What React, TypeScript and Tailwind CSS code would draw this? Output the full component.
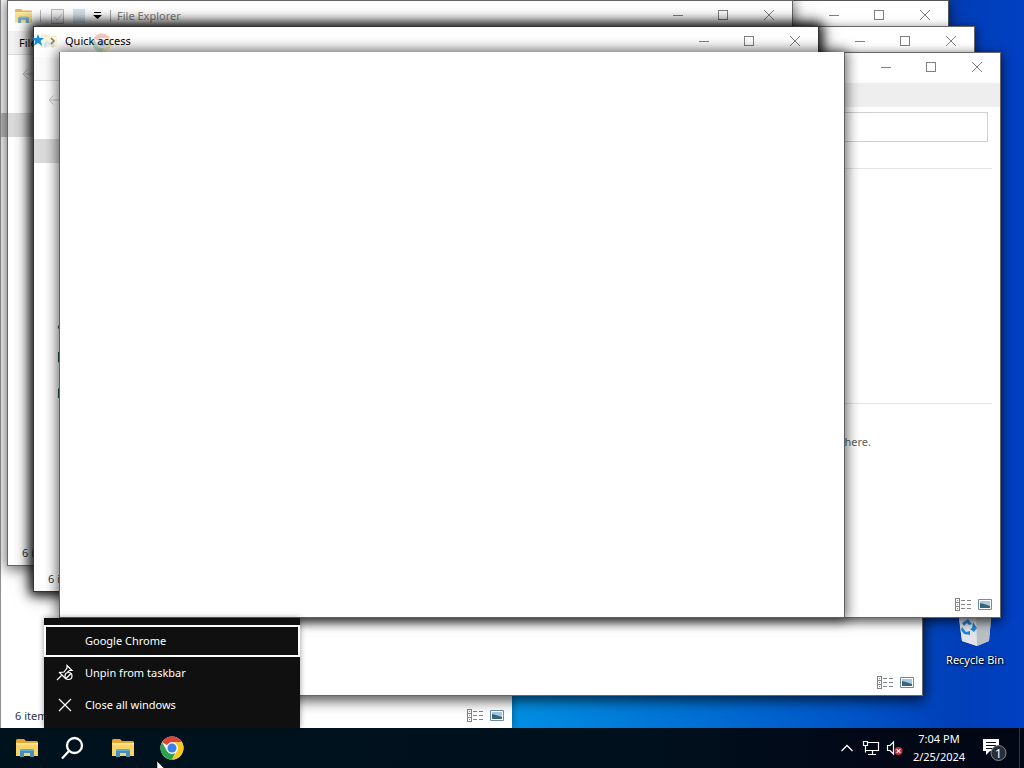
import type { ReactNode } from "react";

function FolderIcon({ className }: { className?: string }) {
  return (
    <svg viewBox="0 0 22 20" className={className} aria-hidden="true">
      <path d="M0 2.500Q0 1 1.500 1H8l2 2h10.500Q22 3 22 4.500V18H0z" fill="#e3a52f" />
      <path d="M0 5h22v13H0z" fill="#f8d468" />
      <path d="M0 5h22v1.500H0z" fill="#fde7a0" />
      <path d="M4 19v-6q0-2 2-2h10q2 0 2 2v6h-4v-4H8v4z" fill="#4690b8" />
      <path d="M4 13q0-2 2-2h10q2 0 2 2z" fill="#5cadd0" />
    </svg>
  );
}

function ChromeIcon({ className }: { className?: string }) {
  return (
    <svg viewBox="0 0 48 48" className={className} aria-hidden="true">
      <circle cx="24" cy="24" r="23" fill="#fff" />
      <path d="M24 1a23 23 0 0 1 19.900 11.500H24a11.500 11.500 0 0 0-10 5.750L4.080 12.500A23 23 0 0 1 24 1z" fill="#dd4437" />
      <path d="M43.900 12.500A23 23 0 0 1 24 47l9.960-17.250A11.500 11.500 0 0 0 34 18.250 11.500 11.500 0 0 0 24 12.500z" fill="#fbc91e" />
      <path d="M24 47A23 23 0 0 1 4.080 12.500L14.040 29.750A11.500 11.500 0 0 0 24 35.500q3.500 0 6.640-2.100z" fill="#2fa24c" />
      <circle cx="24" cy="24" r="11.500" fill="#f4f7fb" />
      <circle cx="24" cy="24" r="9" fill="#3b7fe8" />
    </svg>
  );
}

function Caption() {
  return (
    <div className="ml-auto flex h-full text-[#808080]">
      <button aria-label="Minimize" className="grid h-full w-[46px] place-items-center">
        <svg viewBox="0 0 12 12" className="size-3" fill="none" stroke="currentColor" shapeRendering="crispEdges"><path d="M2 6.500h10" /></svg>
      </button>
      <button aria-label="Maximize" className="grid h-full w-[46px] place-items-center">
        <svg viewBox="0 0 12 12" className="size-3" fill="none" stroke="currentColor" shapeRendering="crispEdges"><path d="M1.500 1.500h9v9h-9z" /></svg>
      </button>
      <button aria-label="Close" className="grid h-full w-[46px] place-items-center">
        <svg viewBox="0 0 12 12" className="size-3" fill="none" stroke="currentColor"><path d="M1 1l10 10M11 1L1 11" /></svg>
      </button>
    </div>
  );
}

function StatusBar({ items }: { items?: boolean }) {
  return (
    <div className="mt-auto flex h-6 items-center justify-between pr-[7px] pl-3.5 text-[#303648]">
      <span>{items ? "6 items" : ""}</span>
      <div className="flex gap-1.5 pb-0.5">
        <button aria-label="Details view" className="block">
          <svg viewBox="0 0 17 13" className="h-[13px] w-[17px]" fill="none" stroke="#7f8388" shapeRendering="crispEdges">
            <path d="M.5.5h4v12h-4zM.5 4.500h4M.5 8.500h4" />
            <path d="M2 2.500h1M2 6.500h1M2 10.500h1M6 2.500h4M12 2.500h4M6 6.500h4M12 6.500h4M6 10.500h4M12 10.500h4" />
          </svg>
        </button>
        <button aria-label="Large icons view" className="block">
          <svg viewBox="0 0 15 13" className="h-[13px] w-[15px]">
            <path d="M.5 1.500h13v10H.5z" fill="#fff" stroke="#6a8ca8" />
            <path d="M2 3h10v7H2z" fill="#a6cbe3" />
            <path d="M2 5l4 1 6 2v2H2z" fill="#3b6478" />
          </svg>
        </button>
      </div>
    </div>
  );
}

function Window({ label, place, title, children, items, blank }: {
  label: string;
  place: string;
  title?: ReactNode;
  children?: ReactNode;
  items?: boolean;
  blank?: boolean;
}) {
  return (
    <section aria-label={label} className={`absolute flex flex-col overflow-hidden bg-white ${place}`}>
      {!blank && (
        <>
          <div className="flex h-[30px] shrink-0 items-center pb-0.5">{title}<Caption /></div>
          {children}
          <StatusBar items={items} />
        </>
      )}
    </section>
  );
}

function BackArrow() {
  return (
    <svg viewBox="0 0 12 12" className="size-3" fill="none" stroke="#c4c4c4" aria-hidden="true"><path d="M12 6H1M5.500 1.500L1 6l4.500 4.500" /></svg>
  );
}

function Desktop() {
  return (
    <main className="relative flex-1 overflow-hidden bg-[linear-gradient(90deg,#008fe2_50%,#0057c8_82%,#003eb8_94%,#0040c2_100%)]">
      <a href="#recycle-bin" className="absolute top-[606px] left-[940px] flex w-[70px] flex-col items-center text-white">
        <svg viewBox="0 0 36 42" className="h-[42px] w-9" aria-hidden="true">
          <path d="M1 3l34-1-3 33-12 5-15-5z" fill="#d0d4d8" />
          <path d="M19 4l16-2-3 33-12 5z" fill="#b9bfc5" />
          <path d="M2 13l17 3 1 24-15-5z" fill="#e0e4e7" />
          <g fill="#2583d5">
            <path d="M5 17l6-4 4 5-3 1-2-2-3 3z" />
            <path d="M16 16l4 6-3 4-4-3 2-1z" />
            <path d="M5 21l4 5 4-1v4l-6-1-3-4z" />
          </g>
        </svg>
        <span className="pt-1 whitespace-nowrap [text-shadow:1px_1px_2px_#000,0_0_2px_#000]">Recycle Bin</span>
      </a>

      <Window label="Explorer, left" place="inset-y-0 left-0 w-[512px] border-l border-[#909090] shadow-[0_0_8px_#0006]" items>
        <div className="mt-[83px] h-6 shrink-0 bg-[#c0c0c0]" />
      </Window>
      <Window label="Explorer" place="top-[130px] left-[138px] h-[566px] w-[785px] border border-[#666] shadow-[0_3px_12px_2px_#000a]" />
      <Window label="Explorer" place="top-0 left-[164px] h-[566px] w-[785px] border border-[#555] shadow-[0_3px_12px_2px_#0008]" />
      <Window label="Explorer" place="top-[26px] left-[190px] h-[566px] w-[785px] border border-[#666] shadow-[0_3px_10px_1px_#0008]" />
      <Window label="Explorer" place="top-[52px] left-[216px] h-[566px] w-[785px] border border-[#666] shadow-[0_3px_10px_1px_#000a]">
        <div className="h-6 shrink-0 bg-[#eee]" />
        <div className="mx-3 mt-[5px] h-[30px] shrink-0 border border-[#d0d0d0]" />
        <div className="mx-2 mt-[26px] h-px shrink-0 bg-[#e4e4e4]" />
        <div className="mx-2 mt-[234px] h-px shrink-0 bg-[#e4e4e4]" />
        <p className="mt-[30px] mr-[129px] text-right leading-4 text-[#606060]">here.</p>
      </Window>

      <Window
        label="File Explorer"
        place="top-0 left-[7px] h-[566px] w-[786px] border border-[#666] shadow-[0_2px_12px_2px_#0008]"
        items
        title={
          <div className="flex items-center gap-2 pt-0.5 pl-[7px] text-[#858585]">
            <FolderIcon className="h-4 w-[17px] opacity-80" />
            <span className="h-3 w-px bg-[#bbb]" />
            <svg viewBox="0 0 14 15" className="ml-0.5 h-[15px] w-3.5" fill="#f3f3f6" stroke="#b5b8c8" aria-hidden="true"><path d="M.5.5h12v14H.5z" /><path d="M3 8l3 3 5-6" fill="none" /></svg>
            <span className="h-3.5 w-3 bg-[#d9dfef]" />
            <svg viewBox="0 0 9 8" className="h-2 w-[9px]" fill="#000" aria-hidden="true"><path d="M1 0h7v1H1zM0 3h9L4.500 7z" /></svg>
            <span className="h-3 w-px bg-[#aaa]" />
            <h2 className="-ml-0.5">File Explorer</h2>
          </div>
        }
      >
        <div className="flex h-6 shrink-0 items-center border-b border-[#ddd] bg-[#f3f3f3] pl-[11px] text-black">File</div>
        <div className="flex h-[38px] shrink-0 items-center pl-3.5"><BackArrow /></div>
        <div className="mt-5 h-6 shrink-0 bg-[#dadada]" />
      </Window>

      <Window
        label="Quick access"
        place="top-[26px] left-[33px] h-[566px] w-[786px] border border-[#333] shadow-[0_0_10px_3px_#000c,0_0_16px_2px_#000a]"
        items
        title={
          <div className="flex items-center pl-[7px] text-black">
            <FolderIcon className="h-4 w-4 opacity-25" />
            <h2 className="relative pl-2">
              <ChromeIcon className="absolute top-0 left-[35px] size-5 opacity-30" />
              <span className="relative">Quick access</span>
            </h2>
          </div>
        }
      >
        <div className="h-6 shrink-0 border-b border-[#ddd] bg-[#fafafa]" />
        <div className="flex h-[38px] shrink-0 items-center pl-3.5"><BackArrow /></div>
        <div className="mt-5 h-6 shrink-0 bg-[#dadada]" />
        <svg viewBox="0 0 4 76" className="mt-40 ml-[23px] h-[76px] w-1 shrink-0" stroke="#28504c" aria-hidden="true"><path d="M3 1L1 4l2 3M1.500 29v10H4M1.500 66v9M1 66h3" fill="none" /></svg>
      </Window>

      <svg viewBox="0 0 24 14" className="absolute top-[34px] left-8 h-3.5 w-6" aria-hidden="true">
        <path d="M6 0l1.500 4H12L8.500 7l2 5L6 9l-4 3 1-5-3-3h4.500z" fill="#198de2" />
        <path d="M19 4l3 3-3 3" fill="none" stroke="#8b7959" strokeWidth="1.500" />
      </svg>

      <Window label="Blank window" place="top-[52px] left-[59px] h-[566px] w-[786px] border border-t-0 border-[#606060] shadow-[0_0_12px_2px_#0009]" blank />
    </main>
  );
}

function ContextMenu() {
  const item = "flex h-8 items-center text-left text-white";
  return (
    <div role="menu" aria-label="Chrome taskbar menu" className="absolute bottom-10 left-11 flex w-64 flex-col bg-[#101010] py-[7px] shadow-[0_0_6px_#0006]">
      <button role="menuitem" className={`${item} border-2 border-white pl-[39px]`}>Google Chrome</button>
      <button role="menuitem" className={`${item} pl-3`}>
        <svg viewBox="0 0 18 18" className="size-[18px]" fill="none" stroke="currentColor" strokeWidth="1.200" aria-hidden="true">
          <path d="M1 16l5-5M3 8l7 7M4 8.500l4-.5 3-4V1.500l5 5h-2.500l-2 1.500" />
          <circle cx="12.500" cy="12" r="3.500" />
          <path d="M10 14.500l5-5" />
        </svg>
        <span className="pl-[11px]">Unpin from taskbar</span>
      </button>
      <button role="menuitem" className={`${item} pl-3`}>
        <svg viewBox="0 0 18 18" className="size-[18px]" fill="none" stroke="currentColor" strokeWidth="1.200" aria-hidden="true"><path d="M3 3l12 12M15 3L3 15" /></svg>
        <span className="pl-[11px]">Close all windows</span>
      </button>
    </div>
  );
}

function Taskbar() {
  return (
    <footer className="flex h-10 shrink-0 items-center bg-[linear-gradient(90deg,#00131d_0%,#00111d_60%,#020817_85%,#020716_100%)] pr-1 text-white">
      <nav aria-label="Taskbar" className="flex items-center">
        <button aria-label="File Explorer" className="grid w-[54px] place-items-center"><FolderIcon className="h-5 w-[22px]" /></button>
        <button aria-label="Search" className="grid w-9 place-items-center">
          <svg viewBox="0 0 24 24" className="size-6" fill="none" stroke="currentColor" strokeWidth="2.300" aria-hidden="true"><circle cx="14.500" cy="9.500" r="7.500" /><path d="M9 15l-7 7.500" /></svg>
        </button>
        <button aria-label="File Explorer window" className="ml-2 grid w-[50px] place-items-center"><FolderIcon className="h-5 w-[22px]" /></button>
        <button aria-label="Google Chrome" className="grid w-12 place-items-center"><ChromeIcon className="size-6" /></button>
      </nav>
      <div className="ml-auto flex items-center">
        <button aria-label="Show hidden icons">
          <svg viewBox="0 0 14 10" className="h-2.5 w-3.5" fill="none" stroke="currentColor" strokeWidth="1.300" aria-hidden="true"><path d="M1.500 8L7 2.500 12.500 8" /></svg>
        </button>
        <button aria-label="Network" className="ml-2">
          <svg viewBox="0 0 18 16" className="h-4 w-[18px]" fill="none" stroke="currentColor" strokeWidth="1.200" aria-hidden="true"><path d="M5 2.500h11.500v8H4M1.500 1.500h4v4h-4zM3.500 5.500v7M10.500 11v3M6 14.500h8" /></svg>
        </button>
        <button aria-label="Volume, muted" className="ml-1.5">
          <svg viewBox="0 0 18 16" className="h-4 w-[18px]" fill="none" stroke="currentColor" strokeWidth="1.200" aria-hidden="true">
            <path d="M1.500 5.500H4L7.500 2v12L4 10.500H1.500z" />
            <circle cx="12.500" cy="11" r="4" fill="#c8303a" stroke="none" />
            <path d="M10.700 9.200l3.600 3.600M14.300 9.200l-3.600 3.600" />
          </svg>
        </button>
        <time dateTime="2024-02-25T19:04" className="w-[70px] text-center leading-[18px]">7:04 PM<br />2/25/2024</time>
        <button aria-label="1 notification" className="ml-2">
          <svg viewBox="0 0 26 26" className="size-[26px]" aria-hidden="true">
            <path d="M1 4h16v12H8l-4 4v-4H1z" fill="#fff" />
            <path d="M4 7.500h10M4 10.500h10M4 13.500h7" stroke="#07101e" />
            <circle cx="16.500" cy="18" r="7.500" fill="#292d35" stroke="#858991" />
            <text x="16.500" y="22.500" textAnchor="middle" fill="#fff" fontSize="12">1</text>
          </svg>
        </button>
        <span className="ml-[11px] h-10 w-px bg-[#30343f]" />
      </div>
    </footer>
  );
}

export default function App() {
  return (
    <div className="relative flex h-screen flex-col overflow-hidden font-['Noto_Sans','Open_Sans',sans-serif] text-[11px] leading-4">
      <Desktop />
      <ContextMenu />
      <Taskbar />
      <svg viewBox="0 0 12 19" className="absolute -bottom-3 left-[157px] h-[19px] w-3" aria-hidden="true"><path d="M0 0v16l4-4 3 7 2-1-3-6h6z" fill="#fff" stroke="#000" strokeWidth=".5" /></svg>
    </div>
  );
}
